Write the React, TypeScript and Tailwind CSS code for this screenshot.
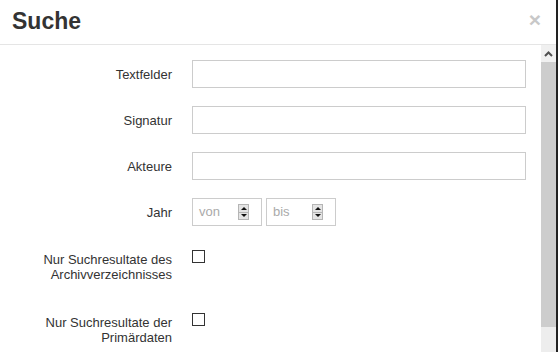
const font = { fontFamily: '"Liberation Sans", Arial, sans-serif' };

const Spinner = () => (
  <div className="flex flex-col w-[11px] h-[16px] border border-[#b5b5b5] bg-[#e4e4e4]">
    <div className="flex-1 flex items-center justify-center border-b border-[#b5b5b5]">
      <div className="w-0 h-0 border-l-[3px] border-r-[3px] border-b-[3px] border-l-transparent border-r-transparent border-b-[#111]" />
    </div>
    <div className="flex-1 flex items-center justify-center">
      <div className="w-0 h-0 border-l-[3px] border-r-[3px] border-t-[3px] border-l-transparent border-r-transparent border-t-[#111]" />
    </div>
  </div>
);

const YearInput = ({ placeholder }: { placeholder: string }) => (
  <div className="flex items-center w-[70px] h-[28px] border border-[#ccc] pl-[6px] pr-[12px]">
    <span className="flex-1 text-[13px] text-[#aaa]">{placeholder}</span>
    <Spinner />
  </div>
);

const Row = ({ label, children, tall }: { label: React.ReactNode; children: React.ReactNode; tall?: boolean }) => (
  <div className={`flex ${tall ? 'mb-[18px]' : 'mb-[18px]'}`}>
    <label className={`w-[142px] ml-[30px] mr-[20px] text-right text-[13px] leading-[15px] text-[#333] ${tall ? 'pt-[8px] pb-[7px]' : 'pt-[7px]'}`}>
      {label}
    </label>
    <div className="flex-1">{children}</div>
  </div>
);

const TextInput = () => <div className="h-[28px] border border-[#ccc] bg-white" />;

const Checkbox = () => <div className="mt-[6px] w-[13px] h-[13px] border border-[#333] bg-white" />;

export default function App() {
  return (
    <div style={font} className="w-[558px] h-[352px] overflow-hidden bg-white flex flex-col border-r-2 border-[#222]">
      <div className="h-[45px] shrink-0 flex items-center justify-between pl-[12px] pr-[15px] border-b border-[#e5e5e5]">
        <h1 className="text-[23px] font-bold text-[#333] mt-[-2px]">Suche</h1>
        <span className="text-[21px] font-bold leading-none text-[#c8c8c8] mt-[-6px]">×</span>
      </div>
      <div className="flex flex-1 min-h-0">
        <div className="flex-1 pt-[15px] pr-[15px]">
          <Row label="Textfelder">
            <TextInput />
          </Row>
          <Row label="Signatur">
            <TextInput />
          </Row>
          <Row label="Akteure">
            <TextInput />
          </Row>
          <Row label="Jahr">
            <div className="flex gap-[4px]">
              <YearInput placeholder="von" />
              <YearInput placeholder="bis" />
            </div>
          </Row>
          <Row label="Nur Suchresultate des Archivverzeichnisses" tall>
            <Checkbox />
          </Row>
          <Row label="Nur Suchresultate der Primärdaten" tall>
            <Checkbox />
          </Row>
        </div>
        <div className="w-[15px] flex flex-col bg-[#ededed]">
          <div className="h-[17px] flex items-center justify-center bg-[#f0f0f0]">
            <svg width="9" height="6" viewBox="0 0 9 6">
              <path d="M1 5 L4.5 1.5 L8 5" fill="none" stroke="#505050" strokeWidth="2" />
            </svg>
          </div>
          <div className="h-[265px] bg-[#cdcdcd]" />
        </div>
      </div>
    </div>
  );
}
